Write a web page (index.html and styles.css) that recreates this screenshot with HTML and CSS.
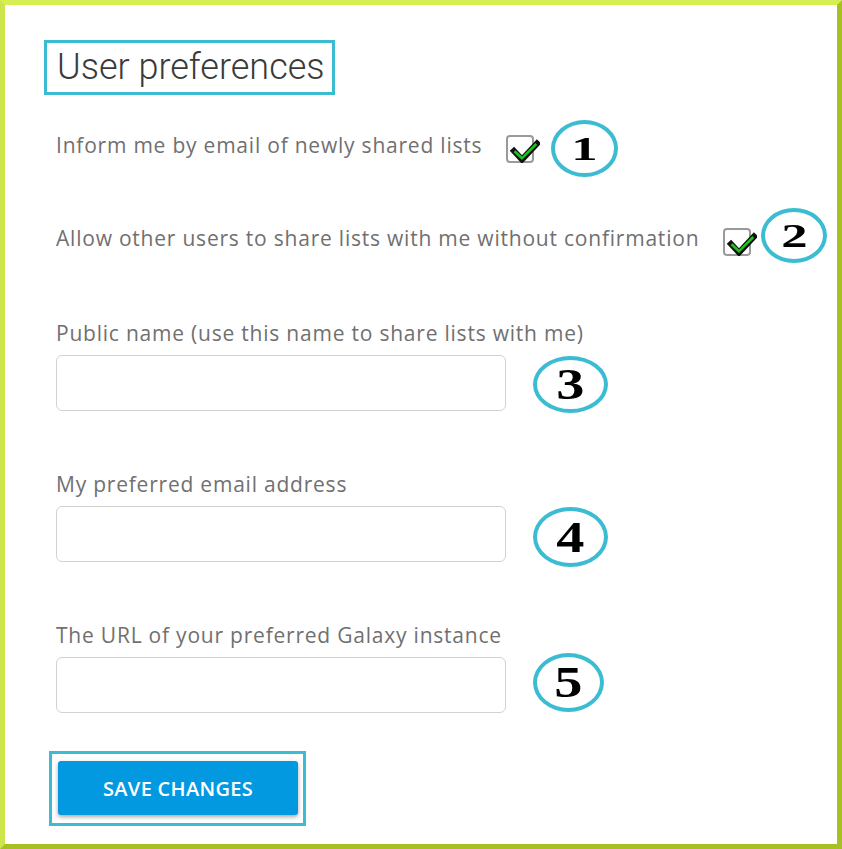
FILE: index.html
```html
<!DOCTYPE html>
<html>
<head>
<meta charset="utf-8">
<link rel="stylesheet" href="styles.css">
</head>
<body>
<div class="frame">
  <div class="content">
    <h1 class="title">User preferences</h1>

    <div class="check-row first">
      <span class="label">Inform me by email of newly shared lists</span>
      <svg class="checkbox" width="34" height="28" viewBox="0 0 34 28">
        <rect x="1" y="1" width="26" height="26" rx="3" fill="#fff" stroke="#9a9a9a" stroke-width="2"/>
        <path d="M8 16 L16 24.5 L31 8.5" fill="none" stroke="#111" stroke-width="6" stroke-linejoin="miter" stroke-linecap="square"/>
        <path d="M8.5 16.2 L16 23.3 L30.3 9" fill="none" stroke="#1fc11f" stroke-width="2.6" stroke-linejoin="miter"/>
      </svg>
      <span class="badge small b1"><span>1</span></span>
    </div>

    <div class="check-row second">
      <span class="label">Allow other users to share lists with me without confirmation</span>
      <svg class="checkbox" width="34" height="28" viewBox="0 0 34 28">
        <rect x="1" y="1" width="26" height="26" rx="3" fill="#fff" stroke="#9a9a9a" stroke-width="2"/>
        <path d="M8 16 L16 24.5 L31 8.5" fill="none" stroke="#111" stroke-width="6" stroke-linejoin="miter" stroke-linecap="square"/>
        <path d="M8.5 16.2 L16 23.3 L30.3 9" fill="none" stroke="#1fc11f" stroke-width="2.6" stroke-linejoin="miter"/>
      </svg>
      <span class="badge small b2"><span>2</span></span>
    </div>

    <div class="field f3">
      <label class="label">Public name (use this name to share lists with me)</label>
      <div class="input-row">
        <input class="input" type="text">
        <span class="badge large b3"><span>3</span></span>
      </div>
    </div>

    <div class="field">
      <label class="label">My preferred email address</label>
      <div class="input-row">
        <input class="input" type="text">
        <span class="badge large b4"><span>4</span></span>
      </div>
    </div>

    <div class="field">
      <label class="label">The URL of your preferred Galaxy instance</label>
      <div class="input-row">
        <input class="input" type="text">
        <span class="badge large b5"><span>5</span></span>
      </div>
    </div>

    <div class="save-box">
      <button class="save">SAVE CHANGES</button>
    </div>
  </div>
</div>
</body>
</html>
```
FILE: styles.css
```css
html, body {
  margin: 0;
  padding: 0;
  background: #fff;
}

.frame {
  width: 842px;
  height: 849px;
  box-sizing: border-box;
  border-top: 5px solid #d6ee52;
  border-left: 5px solid #cde54b;
  border-right: 5px solid #a7c124;
  border-bottom: 5px solid #a7c124;
  background: #fff;
  overflow: hidden;
}

.content {
  padding: 35px 0 0 51px;
}

.title {
  display: inline-block;
  margin: 0 0 0 -12px;
  border: 3px solid #3bbcd3;
  padding: 0 7px 0 10px;
  height: 49px;
  line-height: 49px;
  font-family: Roboto, "Liberation Sans", sans-serif;
  font-weight: 300;
  font-size: 36px;
  color: #3a3a3a;
}

.label {
  font-family: "Open Sans", "Liberation Sans", sans-serif;
  font-size: 21px;
  letter-spacing: 0.78px;
  line-height: 27px;
  color: #707070;
  display: block;
}

.check-row {
  display: flex;
  align-items: center;
}

.check-row.first {
  margin-top: 25px;
}

.first .label {
  margin-top: -6px;
}

.check-row.second {
  margin-top: 31px;
}

.second .label {
  margin-top: 6px;
}

.second .checkbox {
  margin-top: 12px;
}

.check-row .checkbox {
  margin-left: 24px;
  flex: none;
}

.first .badge { margin-left: 11px; }
.second .badge { margin-left: 4px; }

.badge {
  flex: none;
  box-sizing: border-box;
  border: 4px solid #3bbcd3;
  border-radius: 50%;
  display: flex;
  align-items: center;
  justify-content: center;
  font-family: "Liberation Serif", "DejaVu Serif", serif;
  font-weight: 700;
  color: #000;
  background: #fff;
}

.badge span {
  display: inline-block;
  filter: blur(0.5px);
}

.badge.small span {
  font-size: 34px;
  line-height: 1;
  transform: scaleX(1.55);
}

.badge.large span {
  font-size: 45px;
  line-height: 1;
  transform: scaleX(1.25);
}

.b1 { width: 67px; height: 57px; }
.b2 { width: 66px; height: 55px; }
.b3 { width: 75px; height: 57px; }
.b4 { width: 75px; height: 60px; }
.b5 { width: 71px; height: 59px; }

.field {
  margin-top: 57px;
}

.field + .field {
  margin-top: 60px;
}

.input-row {
  display: flex;
  align-items: flex-start;
  height: 56px;
  margin-top: 8px;
  gap: 27px;
}

.input {
  width: 450px;
  height: 56px;
  flex: none;
  box-sizing: border-box;
  border: 1px solid #d2d2d2;
  border-radius: 6px;
  background: #fff;
  margin: 0;
  padding: 0 12px;
}

.input-row .b3 { margin-top: 1px; }
.input-row .b4 { margin-top: 1px; }
.input-row .b5 { margin-top: -4px; }

.save-box {
  display: inline-block;
  margin: 38px 0 0 -7px;
  border: 3px solid #3bbcd3;
  padding: 7px 5px 8px 6px;
}

.save {
  display: block;
  width: 240px;
  height: 54px;
  border: none;
  border-radius: 3px;
  background: #0399e1;
  color: #fff;
  font-family: "Open Sans", "Liberation Sans", sans-serif;
  font-weight: 600;
  font-size: 20px;
  letter-spacing: 0.3px;
  box-shadow: 0 2px 4px rgba(0, 0, 0, 0.35);
  padding: 0;
}
```
